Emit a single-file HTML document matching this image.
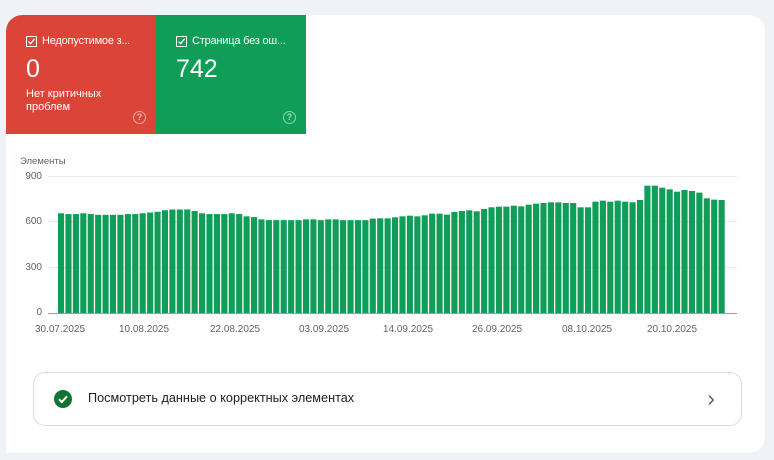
<!DOCTYPE html>
<html><head><meta charset="utf-8"><style>
*{margin:0;padding:0;box-sizing:border-box}
body{width:774px;height:460px;background:#eff2f7;font-family:"Liberation Sans",sans-serif;position:relative;overflow:hidden}
.card{position:absolute;left:6px;top:15px;width:759px;height:438px;background:#fff;border-radius:16px 16px 16px 0;overflow:hidden}
.tile{position:absolute;top:0;width:150px;height:119px;color:#fff}
.red{left:0;background:#db4437;border-top-left-radius:16px}
.green{left:150px;background:#0f9d58}
.cb{position:absolute;left:20px;top:21px;width:11px;height:11px;border:1.3px solid #fff;border-radius:1px}
.cb svg{position:absolute;left:0;top:0}
.tt{position:absolute;left:36px;top:20px;font-size:11px;letter-spacing:-0.2px;white-space:nowrap}
.num{position:absolute;left:20px;top:40px;font-size:25px}
.sub{position:absolute;left:20px;top:73px;font-size:11px;line-height:13px}
.q{position:absolute;left:127px;top:96px;width:13px;height:13px;border:1.3px solid rgba(255,255,255,.55);border-radius:50%;font-size:9px;line-height:10px;text-align:center;color:rgba(255,255,255,.6);font-weight:bold}
.lbl{position:absolute;font-size:10px;color:#5f6368}
.row{position:absolute;left:27px;top:357px;width:709px;height:54px;border:1px solid #dadce0;border-radius:12px}
.row .t{position:absolute;left:54px;top:18px;font-size:12.7px;color:#202124}
</style></head><body>
<div class="card">
<div class="tile red"><div class="cb"><svg width="9" height="9" viewBox="0 0 9 9"><path d="M1.5 4.5 L3.6 6.6 L7.6 1.8" stroke="#fff" stroke-width="1.3" fill="none"/></svg></div><div class="tt">Недопустимое з...</div><div class="num">0</div><div class="sub">Нет критичных<br>проблем</div><div class="q">?</div></div>
<div class="tile green"><div class="cb"><svg width="9" height="9" viewBox="0 0 9 9"><path d="M1.5 4.5 L3.6 6.6 L7.6 1.8" stroke="#fff" stroke-width="1.3" fill="none"/></svg></div><div class="tt">Страница без ош...</div><div class="num">742</div><div class="q">?</div></div>
<div class="lbl" style="left:14px;top:141px;font-size:9.5px">Элементы</div>
<div class="lbl" style="left:14px;top:156px;width:22px;text-align:right">900</div>
<div class="lbl" style="left:14px;top:201px;width:22px;text-align:right">600</div>
<div class="lbl" style="left:14px;top:247px;width:22px;text-align:right">300</div>
<div class="lbl" style="left:14px;top:292px;width:22px;text-align:right">0</div>
<svg id="ch" style="position:absolute;left:0;top:0" width="759" height="330"></svg>
<div class="lbl" style="left:24px;top:309px;width:60px;text-align:center">30.07.2025</div>
<div class="lbl" style="left:108px;top:309px;width:60px;text-align:center">10.08.2025</div>
<div class="lbl" style="left:199px;top:309px;width:60px;text-align:center">22.08.2025</div>
<div class="lbl" style="left:288px;top:309px;width:60px;text-align:center">03.09.2025</div>
<div class="lbl" style="left:372px;top:309px;width:60px;text-align:center">14.09.2025</div>
<div class="lbl" style="left:461px;top:309px;width:60px;text-align:center">26.09.2025</div>
<div class="lbl" style="left:551px;top:309px;width:60px;text-align:center">08.10.2025</div>
<div class="lbl" style="left:636px;top:309px;width:60px;text-align:center">20.10.2025</div>
<div class="row">
<svg style="position:absolute;left:20px;top:17px" width="18" height="18" viewBox="0 0 18 18"><circle cx="9" cy="9" r="9" fill="#137333"/><path d="M5 9.2 L7.8 12 L13 6.3" stroke="#fff" stroke-width="2" fill="none"/></svg>
<div class="t">Посмотреть данные о корректных элементах</div>
<svg style="position:absolute;left:672px;top:20px" width="10" height="14" viewBox="0 0 10 14"><path d="M3 2.5 L7.2 7 L3 11.5" stroke="#5f6368" stroke-width="1.6" fill="none"/></svg>
</div>
</div>
<script>
var a=[655,650,650,655,650,645,645,645,645,650,650,655,660,665,675,680,680,680,670,655,650,650,650,655,650,635,630,615,610,610,610,610,610,615,615,610,615,615,610,610,610,610,620];
var z=[205,205,202,199,197,199,196,191,191,194,186,183,181,184,177,172,170,170,167,169,164,161,159,157,157,159,159,172,172,155,152,155,152,155,157,150,107,107,113,118,125,120,123,128,145,149,150];
z.forEach(function(y){var r=150+y/3;a.push((313-r)/137*900);});
var s='',ox=-6,oy=-15,x0=58,x1=726,p=(x1-x0)/a.length;
[176,221,267].forEach(function(g){s+='<rect x="'+(48+ox)+'" y="'+(g+oy)+'" width="689" height="1" fill="#e8eaed"/>';});
a.forEach(function(v,i){var h=v/900*137;s+='<rect x="'+(x0+ox+i*p).toFixed(2)+'" y="'+(313+oy-h).toFixed(2)+'" width="'+(p-1.3).toFixed(2)+'" height="'+h.toFixed(2)+'" fill="#0f9d58"/>';});
s+='<rect x="'+(48+ox)+'" y="'+(313+oy)+'" width="689" height="1" fill="#9aa0a6"/>';
document.getElementById('ch').innerHTML=s;
</script>
</body></html>
